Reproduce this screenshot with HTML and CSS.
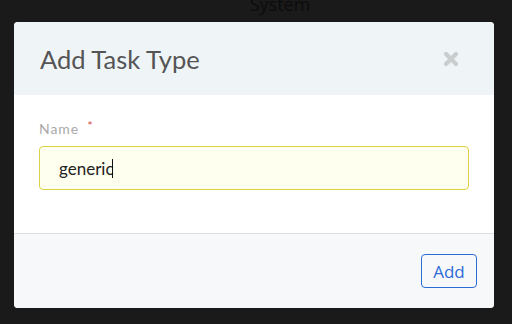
FILE: index.html
```html
<!DOCTYPE html>
<html lang="en">
<head>
  <meta charset="UTF-8">
  <title>Add Task Type</title>
  <link rel="stylesheet" href="styles.css">
</head>
<body>
  <div class="fondo">System</div>

  <!-- Modal para crear un tipo de tarea -->
  <div class="modal">
    <div class="cabecera">
      <h2>Add Task Type</h2>
      <svg class="cerrar" width="16" height="16" viewBox="0 0 16 16">
        <path d="M3 3 L13 13 M13 3 L3 13" stroke="#c9cdcd" stroke-width="4.2" stroke-linecap="round"/>
      </svg>
    </div>
    <div class="cuerpo">
      <label class="etiqueta">Name <span class="req">*</span></label>
      <div class="campo">generic<span class="cursor"></span></div>
    </div>
    <div class="pie">
      <button class="boton">Add</button>
    </div>
  </div>
</body>
</html>
```

FILE: styles.css
```css
body {
  background: #1a1a1a;
  margin: 0;
  font-family: 'Lato', sans-serif;
  overflow: hidden;
}

.fondo {
  color: #0c0c0c;
  font-size: 18px;
  text-align: center;
  margin-left: 48px;
  line-height: 14px;
  height: 22px;
  margin-top: -3px;
  font-family: 'Open Sans', sans-serif;
}

.modal {
  width: 480px;
  margin-left: 14px;
  margin-top: 3px;
  border-radius: 4px;
  overflow: hidden;
  background: #fff;
}

.cabecera {
  background: #eff4f7;
  height: 73px;
  display: flex;
  align-items: center;
  justify-content: space-between;
  padding: 0 35px 0 26px;
}

.cabecera h2 {
  margin: 0;
  font-weight: 400;
  font-size: 25.5px;
  color: #555;
}

.cerrar {
  display: block;
}

.cuerpo {
  padding: 23px 25px 43px 25px;
  border-bottom: 1px solid #dcdfe3;
}

.etiqueta {
  display: block;
  color: #a9a9a9;
  font-size: 14px;
  letter-spacing: 0.9px;
  line-height: 16px;
  margin-bottom: 9px;
}

.req {
  color: #d94444;
  font-size: 12px;
  vertical-align: 4px;
  margin-left: 4px;
}

.campo {
  height: 42px;
  border: 1px solid #ddd047;
  background: #fffff0;
  border-radius: 4px;
  padding: 0 19px;
  display: flex;
  align-items: center;
  font-size: 17px;
  color: #222;
}

.cursor {
  display: inline-block;
  width: 1px;
  height: 19px;
  background: #111;
  margin-left: -2px;
}

.pie {
  background: #f7f8fa;
  height: 74px;
  display: flex;
  align-items: center;
  justify-content: flex-end;
  padding-right: 17px;
}

.boton {
  background: transparent;
  border: 1px solid #2d6bd6;
  border-radius: 4px;
  color: #2d6bd6;
  font-family: 'Open Sans', sans-serif;
  font-size: 17px;
  height: 34px;
  width: 56px;
  padding: 0;
}
```
